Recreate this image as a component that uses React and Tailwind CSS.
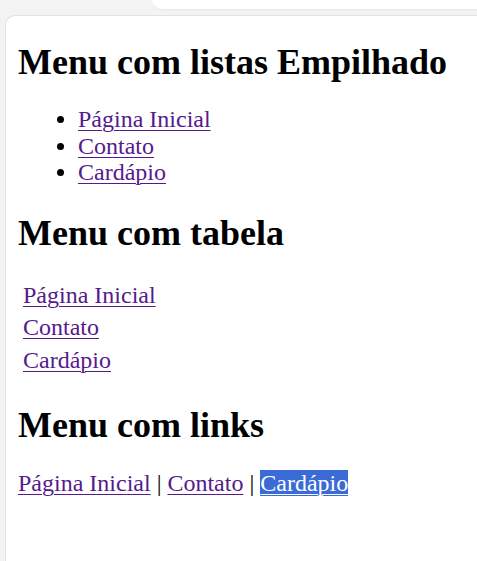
export default function App() {
  const link = "text-[#551a8b] underline decoration-[1px] underline-offset-[3px]";
  return (
    <div className="min-h-screen bg-[#f3f3f3] flex flex-col" style={{ fontFamily: '"Liberation Serif", "Times New Roman", serif' }}>
      <div className="h-[15px] flex">
        <div className="ml-[152px] flex-1 h-[10px] bg-white rounded-bl-[14px] border-b border-[#e6e6e6]"></div>
      </div>
      <div className="ml-[5px] flex-1 bg-white border-l border-t border-[#e2e2e2] rounded-tl-[10px] pl-[12px] pr-[12px] text-black">
        <h1 className="mt-[26px] text-[36px] leading-[40px] font-bold">Menu com listas Empilhado</h1>
        <ul className="mt-[24px] pl-[60px] list-disc text-[24px] leading-[26.5px]">
          <li><a href="#" className={link}>Página Inicial</a></li>
          <li><a href="#" className={link}>Contato</a></li>
          <li><a href="#" className={link}>Cardápio</a></li>
        </ul>
        <h2 className="mt-[27px] text-[36px] leading-[40px] font-bold">Menu com tabela</h2>
        <div className="mt-[26px] pl-[5px] flex flex-col text-[24px] leading-[32.5px]">
          <div><a href="#" className={link}>Página Inicial</a></div>
          <div><a href="#" className={link}>Contato</a></div>
          <div><a href="#" className={link}>Cardápio</a></div>
        </div>
        <h2 className="mt-[29px] text-[36px] leading-[40px] font-bold">Menu com links</h2>
        <p className="mt-[24.5px] text-[24px] leading-[27px]">
          <a href="#" className={link}>Página Inicial</a> | <a href="#" className={link}>Contato</a> | <a href="#" className="text-white bg-[#3a6bd6] underline decoration-[1px] underline-offset-[3px]">Cardápio</a>
        </p>
      </div>
    </div>
  );
}
